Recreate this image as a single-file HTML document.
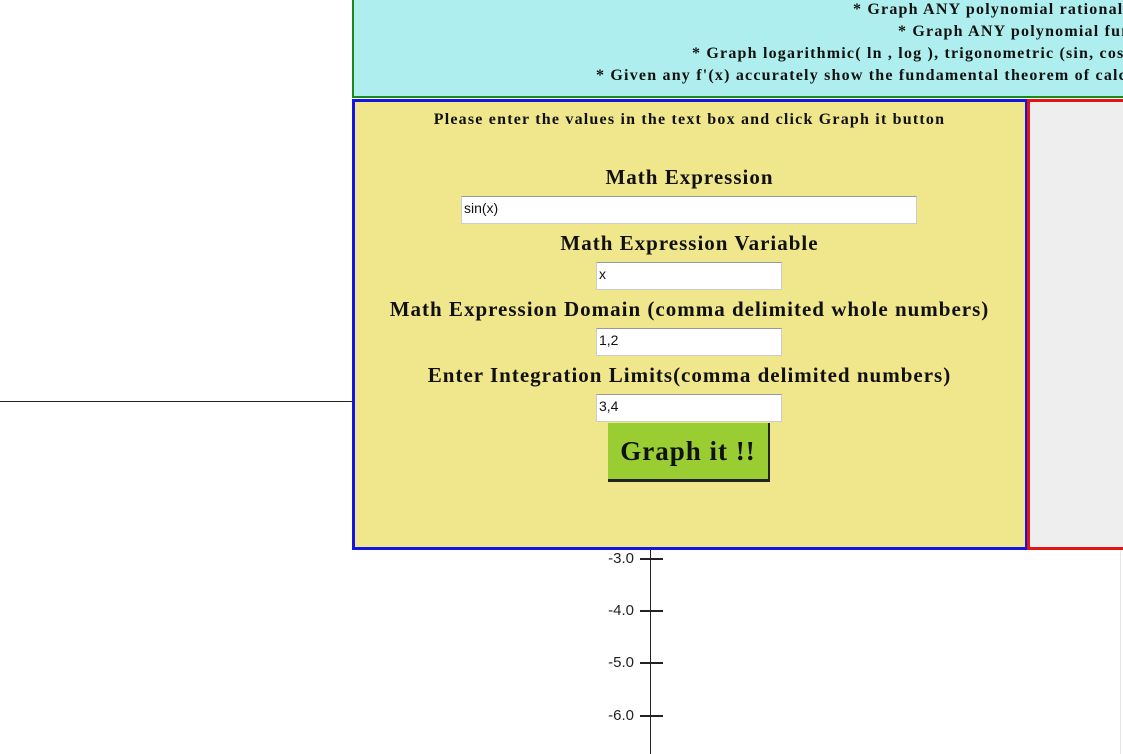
<!DOCTYPE html>
<html><head><meta charset="utf-8"><style>
html,body{margin:0;width:1123px;height:754px;overflow:hidden;background:#fff}
#w{position:relative;width:1123px;height:754px;overflow:hidden;font-family:"Liberation Serif",serif}
.a{position:absolute}
.cy{left:352px;top:-4px;width:771px;height:102px;background:#afeeee;border:2px solid #1a8a1a;border-right:none;box-sizing:border-box}
.t{position:absolute;font-weight:bold;font-size:16px;white-space:nowrap;color:#111;letter-spacing:1.2px}
.h{position:absolute;font-weight:bold;font-size:21px;white-space:nowrap;color:#111;width:675px;text-align:center;left:352px;letter-spacing:1px}
.in{position:absolute;background:#fff;border:1px solid #ccc;border-top-color:#999;box-sizing:border-box;font-family:"Liberation Sans",sans-serif;font-size:14px;padding:3px 2px;color:#111}
.lb{position:absolute;font-family:"Liberation Sans",sans-serif;font-size:15px;right:489px;color:#222}
.tk{position:absolute;left:640px;width:23px;height:2px;background:#222}
</style></head><body><div id="w">
<div class="a" style="left:0;top:401px;width:352px;height:1px;background:#222"></div>
<div class="a" style="left:650px;top:549px;width:1px;height:205px;background:#222"></div>
<div class="tk" style="top:558px"></div><div class="tk" style="top:610px"></div><div class="tk" style="top:662px"></div><div class="tk" style="top:715px"></div>
<div class="lb" style="top:550px">-3.0</div><div class="lb" style="top:602px">-4.0</div><div class="lb" style="top:654px">-5.0</div><div class="lb" style="top:707px">-6.0</div>
<div class="a" style="left:1120px;top:549px;width:1px;height:205px;background:#e6e6e6"></div>
<div class="a cy"></div>
<div class="a" style="left:352px;top:0;width:771px;height:100px;overflow:hidden">
<div class="t" style="left:501px;top:1px">* Graph ANY polynomial rational functions</div>
<div class="t" style="left:546px;top:23px">* Graph ANY polynomial functions</div>
<div class="t" style="left:340px;top:45px">* Graph logarithmic( ln , log ), trigonometric (sin, cos, tan) functions</div>
<div class="t" style="left:244px;top:67px">* Given any f'(x) accurately show the fundamental theorem of calculus</div>
</div>
<div class="a" style="left:352px;top:99px;width:676px;height:451px;background:#f0e68c;border:3px solid #1515e0;box-sizing:border-box"></div>
<div class="a" style="left:1027px;top:99px;width:96px;height:451px;background:#eeeeee;border:3px solid #e01515;border-right:none;box-sizing:border-box"></div>
<div class="t" style="left:352px;width:675px;text-align:center;top:111px">Please enter the values in the text box and click Graph it button</div>
<div class="h" style="top:165px">Math Expression</div>
<div class="in" style="left:461px;top:196px;width:456px;height:28px">sin(x)</div>
<div class="h" style="top:231px">Math Expression Variable</div>
<div class="in" style="left:596px;top:262px;width:186px;height:28px">x</div>
<div class="h" style="top:297px">Math Expression Domain (comma delimited whole numbers)</div>
<div class="in" style="left:596px;top:328px;width:186px;height:28px">1,2</div>
<div class="h" style="top:363px">Enter Integration Limits(comma delimited numbers)</div>
<div class="in" style="left:596px;top:394px;width:186px;height:28px">3,4</div>
<div class="a" style="left:608px;top:423px;width:162px;height:59px;background:#9acd32;border-right:2px solid #222;border-bottom:3px solid #222;box-sizing:border-box;font-weight:bold;font-size:27px;text-align:center;line-height:56px;color:#111;letter-spacing:1px">Graph it !!</div>
</div></body></html>
